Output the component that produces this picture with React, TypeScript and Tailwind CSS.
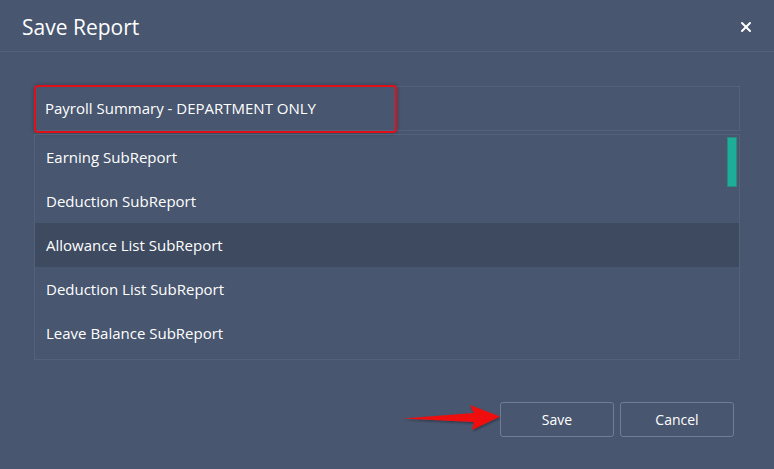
import { X } from "lucide-react";

const items = [
  "Earning SubReport",
  "Deduction SubReport",
  "Allowance List SubReport",
  "Deduction List SubReport",
  "Leave Balance SubReport",
];

function Arrow() {
  return (
    <svg width="104" height="32" viewBox="0 0 104 32" className="absolute left-[400px] top-[403px]">
      <defs>
        <filter id="sh" x="-10%" y="-30%" width="120%" height="160%">
          <feDropShadow dx="1" dy="1.5" stdDeviation="1.2" floodColor="#000" floodOpacity="0.35" />
        </filter>
      </defs>
      <polygon
        points="3,15.5 74,10 70,2 100,13.5 72,27 74,19"
        fill="#f01010"
        filter="url(#sh)"
      />
    </svg>
  );
}

export default function App() {
  return (
    <div
      className="relative h-[469px] w-[774px] overflow-hidden bg-[#48566f] text-white"
      style={{ fontFamily: '"Segoe UI", "Open Sans", "Noto Sans", sans-serif' }}
    >
      <div className="flex h-[52px] items-center justify-between border-b border-[#53627b] pl-[22px] pr-[20px] pt-[3px]">
        <h1 className="text-[21px] font-normal leading-none">Save Report</h1>
        <X className="h-[16px] w-[16px]" strokeWidth={3} />
      </div>

      <div className="px-[34px] pt-[34px]">
        <div className="relative flex h-[45px] items-center border border-[#53627b] pl-[10px] text-[15px]">
          <div className="absolute -left-[1px] -top-[2px] h-[48px] w-[363px] rounded-[4px] border-2 border-[#e0101a] shadow-[0_0_4px_rgba(0,0,0,0.3)]" />
          Payroll Summary - DEPARTMENT ONLY
        </div>

        <div className="relative mt-[3px] h-[226px] border border-[#53627b]">
          {items.map((t, i) => (
            <div
              key={t}
              className={`flex h-[44px] items-center pl-[11px] text-[15px] ${
                i === 2 ? "bg-[#3e4a60]" : ""
              }`}
            >
              {t}
            </div>
          ))}
          <div className="absolute right-[2px] top-[2px] h-[50px] w-[10px] border border-[#2a8a7c] bg-[#1cae99]" />
        </div>
      </div>

      <div className="flex justify-end gap-[6px] pr-[40px] pt-[42px]">
        <button className="h-[35px] w-[114px] rounded-[3px] border border-[#6f7d96] text-[14px]">
          Save
        </button>
        <button className="h-[35px] w-[114px] rounded-[3px] border border-[#6f7d96] text-[14px]">
          Cancel
        </button>
      </div>

      <Arrow />
    </div>
  );
}
